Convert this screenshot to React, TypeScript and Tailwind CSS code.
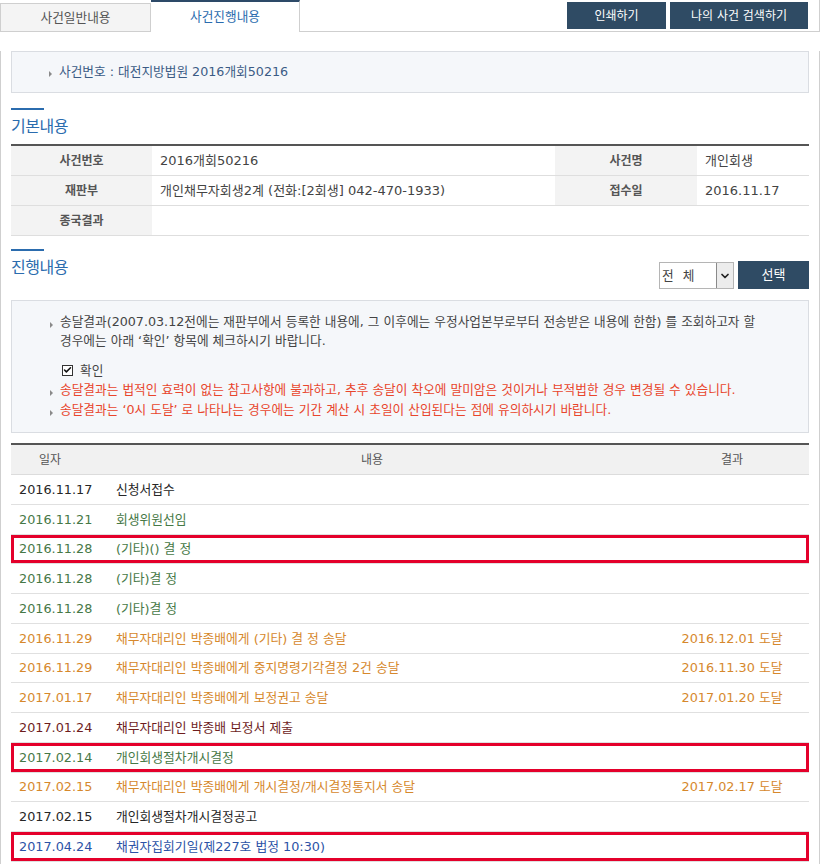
import { Check, ChevronDown } from "lucide-react";

type Row = {
  date: string;
  text: string;
  result?: string;
  color: string;
  mark?: boolean;
};

const GREEN = "text-[#467846]";
const ORANGE = "text-[#d6882c]";
const BLACK = "text-[#262626]";
const MAROON = "text-[#6e1d1d]";
const BLUE = "text-[#2b52a6]";

const rows: Row[] = [
  { date: "2016.11.17", text: "신청서접수", color: BLACK },
  { date: "2016.11.21", text: "회생위원선임", color: GREEN },
  { date: "2016.11.28", text: "(기타)() 결 정", color: GREEN, mark: true },
  { date: "2016.11.28", text: "(기타)결 정", color: GREEN },
  { date: "2016.11.28", text: "(기타)결 정", color: GREEN },
  { date: "2016.11.29", text: "채무자대리인 박종배에게 (기타) 결 정 송달", result: "2016.12.01 도달", color: ORANGE },
  { date: "2016.11.29", text: "채무자대리인 박종배에게 중지명령기각결정 2건 송달", result: "2016.11.30 도달", color: ORANGE },
  { date: "2017.01.17", text: "채무자대리인 박종배에게 보정권고 송달", result: "2017.01.20 도달", color: ORANGE },
  { date: "2017.01.24", text: "채무자대리인 박종배 보정서 제출", color: MAROON },
  { date: "2017.02.14", text: "개인회생절차개시결정", color: GREEN, mark: true },
  { date: "2017.02.15", text: "채무자대리인 박종배에게 개시결정/개시결정통지서 송달", result: "2017.02.17 도달", color: ORANGE },
  { date: "2017.02.15", text: "개인회생절차개시결정공고", color: BLACK },
  { date: "2017.04.24", text: "채권자집회기일(제227호 법정 10:30)", color: BLUE, mark: true },
];

function Bullet() {
  return (
    <span className="inline-block w-0 h-0 border-y-[3px] border-y-transparent border-l-[3px] border-l-[#8a8a8a] mr-[7px] translate-y-[2px]" />
  );
}

function SectionTitle({ title }: { title: string }) {
  return (
    <div>
      <div className="w-[33px] h-[2px] bg-[#2b6cae]" />
      <div className="h-[34px] flex items-center text-[16px] tracking-[-0.5px] text-[#2b6cae]">{title}</div>
    </div>
  );
}

export default function App() {
  return (
    <div className="w-[820px] bg-white text-[12px] text-[#333] font-['DejaVu_Sans','Noto_Sans_CJK_KR',sans-serif]">
      {/* tabs + top buttons */}
      <div className="flex h-[32px] text-[12.7px]">
        <div className="w-[151px] mt-[3px] flex items-center justify-center bg-[#f4f4f4] border border-[#cfcfcf] text-[#555]">
          사건일반내용
        </div>
        <div className="w-[149px] flex items-center justify-center bg-white border-t-2 border-t-[#2d4a68] border-r border-r-[#cfcfcf] text-[#2b6cae]">
          사건진행내용
        </div>
        <div className="flex-1 flex justify-end items-start gap-[4px] pt-[2px] pr-[11px] border-b border-r border-[#cfcfcf] text-[12px]">
          <button className="w-[99px] h-[27px] bg-[#2f4b64] text-white">인쇄하기</button>
          <button className="w-[138px] h-[27px] bg-[#2f4b64] text-white">나의 사건 검색하기</button>
        </div>
      </div>

      <div className="border-x border-[#cfcfcf] px-[10px] pb-[20px]">
        {/* case number */}
        <div className="mt-[19px] h-[42px] flex items-center pl-[37px] bg-[#f5f7fa] border border-[#dadde2] text-[12.7px] text-[#3b5b85]">
          <Bullet />
          사건번호 : 대전지방법원 2016개회50216
        </div>

        {/* basic info */}
        <div className="mt-[15px]">
          <SectionTitle title="기본내용" />
          <div className="border-t-2 border-[#555]">
            <div className="flex h-[30px] border-b border-[#dedede]">
              <div className="w-[141px] bg-[#f3f3f3] flex items-center justify-center font-bold text-[#555]">사건번호</div>
              <div className="w-[403px] flex items-center pl-[8px] text-[13px] text-[#444]">2016개회50216</div>
              <div className="w-[142px] bg-[#f3f3f3] flex items-center justify-center font-bold text-[#555]">사건명</div>
              <div className="flex-1 flex items-center pl-[8px] text-[13px] text-[#444]">개인회생</div>
            </div>
            <div className="flex h-[30px] border-b border-[#dedede]">
              <div className="w-[141px] bg-[#f3f3f3] flex items-center justify-center font-bold text-[#555]">재판부</div>
              <div className="w-[403px] flex items-center pl-[8px] text-[13px] text-[#444]">개인채무자회생2계 (전화:[2회생] 042-470-1933)</div>
              <div className="w-[142px] bg-[#f3f3f3] flex items-center justify-center font-bold text-[#555]">접수일</div>
              <div className="flex-1 flex items-center pl-[8px] text-[13px] text-[#444]">2016.11.17</div>
            </div>
            <div className="flex h-[30px] border-b border-[#dedede]">
              <div className="w-[141px] bg-[#f3f3f3] flex items-center justify-center font-bold text-[#555]">종국결과</div>
              <div className="flex-1" />
            </div>
          </div>
        </div>

        {/* progress */}
        <div className="mt-[13px] flex justify-between items-end h-[40px]">
          <div className="self-start">
            <SectionTitle title="진행내용" />
          </div>
          <div className="flex items-end gap-[4px]">
            <div className="flex h-[27px] border border-[#b5b5b5] bg-white">
              <div className="w-[56px] flex items-center pl-[2px] text-[12.7px] text-[#444]">
                <span>전</span>
                <span className="ml-[9px]">체</span>
              </div>
              <div className="w-[17px] flex items-center justify-center bg-[#ececec] border-l border-[#8a8a8a]">
                <ChevronDown size={12} strokeWidth={3.5} color="#222" />
              </div>
            </div>
            <button className="w-[71px] h-[28px] bg-[#2f4b64] text-white text-[13px]">선택</button>
          </div>
        </div>

        <div className="mt-[11px] bg-[#f5f7fa] border border-[#dadde2] pl-[38px] pt-[11px] pb-[12px] text-[12.7px] leading-[19px] text-[#444]">
          <div className="whitespace-nowrap">
            <Bullet />
            송달결과(2007.03.12전에는 재판부에서 등록한 내용에, 그 이후에는 우정사업본부로부터 전송받은 내용에 한함) 를 조회하고자 할
          </div>
          <div className="pl-[10px]">경우에는 아래 ‘확인’ 항목에 체크하시기 바랍니다.</div>
          <div className="mt-[10px] h-[20px] flex items-center pl-[12px] gap-[7px]">
            <span className="w-[11px] h-[11px] border border-[#333] bg-white flex items-center justify-center">
              <Check size={10} strokeWidth={4} color="#111" />
            </span>
            <span>확인</span>
          </div>
          <div className="leading-[20px] text-[#e8452c] whitespace-nowrap">
            <Bullet />
            송달결과는 법적인 효력이 없는 참고사항에 불과하고, 추후 송달이 착오에 말미암은 것이거나 부적법한 경우 변경될 수 있습니다.
          </div>
          <div className="leading-[20px] text-[#e8452c] whitespace-nowrap">
            <Bullet />
            송달결과는 ‘0시 도달’ 로 나타나는 경우에는 기간 계산 시 초일이 산입된다는 점에 유의하시기 바랍니다.
          </div>
        </div>

        {/* progress table */}
        <div className="mt-[10px] border-t-2 border-[#555]">
          <div className="flex h-[30px] bg-[#f1f1f1] border-b border-[#dcdcdc] text-[#555]">
            <div className="w-[78px] flex items-center justify-center">일자</div>
            <div className="w-[566px] flex items-center justify-center">내용</div>
            <div className="flex-1 flex items-center justify-center">결과</div>
          </div>
          {rows.map((r, i) => (
            <div
              key={i}
              className={`flex h-[29.75px] border-b border-[#e0e0e0] text-[12.8px] ${r.color} ${r.mark ? "ring-3 ring-inset ring-[#e4002b]" : ""}`}
            >
              <div className="w-[78px] flex items-center pl-[8px] whitespace-nowrap">{r.date}</div>
              <div className="w-[566px] flex items-center pl-[27px] whitespace-nowrap">{r.text}</div>
              <div className="flex-1 flex items-center justify-center whitespace-nowrap">{r.result}</div>
            </div>
          ))}
        </div>
      </div>
    </div>
  );
}
